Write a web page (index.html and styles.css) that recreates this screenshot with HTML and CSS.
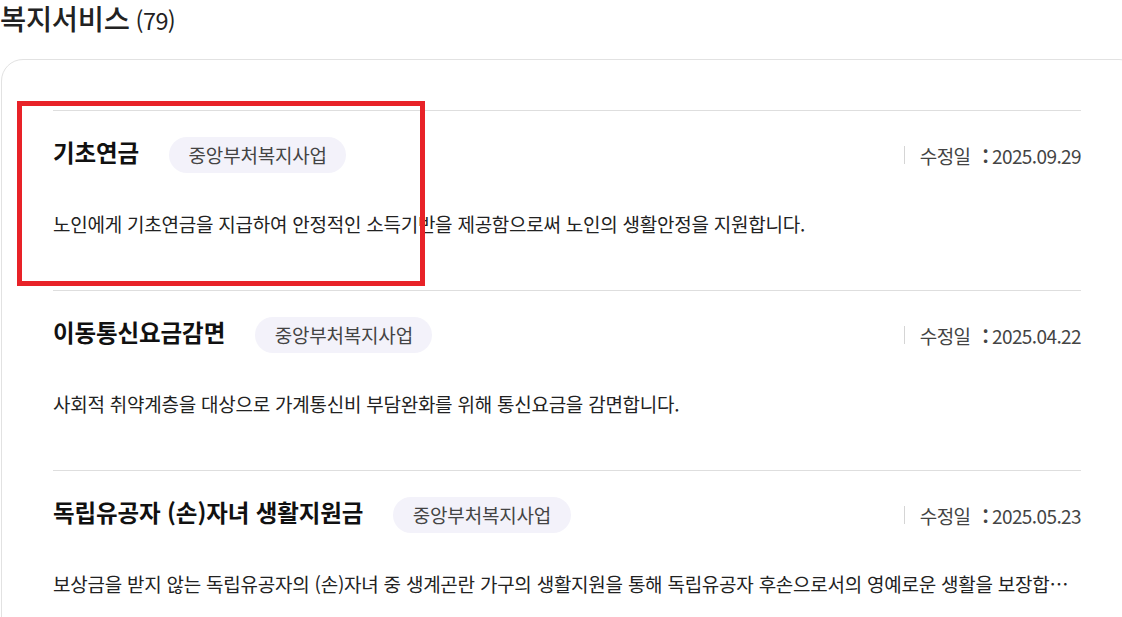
FILE: index.html
```html
<!DOCTYPE html>
<html lang="ko">
<head>
<meta charset="utf-8">
<link rel="stylesheet" href="styles.css">
</head>
<body>
<div class="page">
  <h2 class="page-title">복지서비스<span class="count">(79)</span></h2>
  <div class="card">
    <ul class="list">
      <li class="item">
        <div class="item-head">
          <div class="item-left">
            <strong class="item-title">기초연금</strong>
            <span class="badge">중앙부처복지사업</span>
          </div>
          <div class="date"><span class="date-label">수정일</span><span class="colon">:</span><span class="date-val">2025.09.29</span></div>
        </div>
        <p class="desc">노인에게 기초연금을 지급하여 안정적인 소득기반을 제공함으로써 노인의 생활안정을 지원합니다.</p>
      </li>
      <li class="item">
        <div class="item-head">
          <div class="item-left">
            <strong class="item-title">이동통신요금감면</strong>
            <span class="badge">중앙부처복지사업</span>
          </div>
          <div class="date"><span class="date-label">수정일</span><span class="colon">:</span><span class="date-val">2025.04.22</span></div>
        </div>
        <p class="desc">사회적 취약계층을 대상으로 가계통신비 부담완화를 위해 통신요금을 감면합니다.</p>
      </li>
      <li class="item">
        <div class="item-head">
          <div class="item-left">
            <strong class="item-title">독립유공자 (손)자녀 생활지원금</strong>
            <span class="badge">중앙부처복지사업</span>
          </div>
          <div class="date"><span class="date-label">수정일</span><span class="colon">:</span><span class="date-val">2025.05.23</span></div>
        </div>
        <p class="desc">보상금을 받지 않는 독립유공자의 (손)자녀 중 생계곤란 가구의 생활지원을 통해 독립유공자 후손으로서의 영예로운 생활을 보장합니다.</p>
      </li>
    </ul>
  </div>
  <div class="highlight"></div>
</div>
</body>
</html>
```

FILE: styles.css
```css
* { box-sizing: border-box; }
html, body { margin: 0; padding: 0; background: #fff; }
body {
  font-family: "Noto Sans CJK KR", "Noto Sans", sans-serif;
  color: #222;
  overflow: hidden;
}
.page { position: relative; width: 1122px; height: 617px; overflow: hidden; }
.page-title {
  margin: 0;
  font-size: 28.5px;
  font-weight: 500;
  line-height: 36px;
  letter-spacing: -0.3px;
  color: #222;
}
.count { font-size: 23.5px; font-weight: 400; margin-left: 6px; letter-spacing: -0.6px; }
.card {
  margin: 21px 0 0 1px;
  width: 1140px;
  border: 1px solid #e2e2e2;
  border-radius: 22px;
  padding: 50px 0 0 51px;
  height: 620px;
}
.list { list-style: none; margin: 0; padding: 0; width: 1028px; }
.item {
  border-top: 1px solid #dedede;
  height: 180px;
  padding-top: 26px;
}
.item-head { display: flex; justify-content: space-between; align-items: center; height: 36px; }
.item-left { display: flex; align-items: center; }
.item-title { font-size: 23.5px; font-weight: 700; letter-spacing: -0.1px; color: #111; position: relative; top: -3px; }
.badge {
  margin-left: 30px;
  background: #f3f2fa;
  border-radius: 18px;
  height: 36px;
  line-height: 35px;
  padding: 0 19.5px;
  font-size: 19px;
  color: #444;
  letter-spacing: -0.2px;
}
.date { display: flex; align-items: center; font-size: 19px; color: #444; letter-spacing: -0.6px; }
.date::before { content: ""; width: 1px; height: 18px; background: #d5d5d5; margin-right: 15px; }
.colon { margin: 0 4px 0 12px; font-weight: 700; }
.desc {
  margin: 38px 0 0;
  font-size: 19px;
  line-height: 26px;
  letter-spacing: -0.25px;
  color: #222;
  white-space: nowrap;
  overflow: hidden;
  text-overflow: ellipsis;
}
.highlight {
  position: absolute;
  left: 17px;
  top: 101px;
  width: 408px;
  height: 185px;
  border: 5px solid #e82228;
}
```
